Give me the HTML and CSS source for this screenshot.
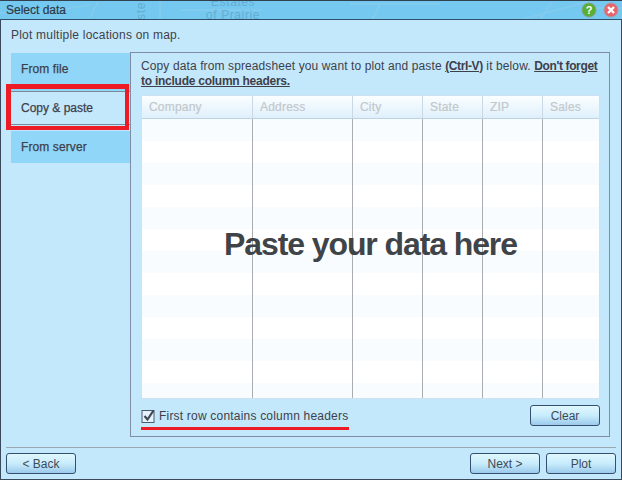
FILE: index.html
```html
<!DOCTYPE html>
<html lang="en">
<head>
<meta charset="utf-8">
<title>Select data</title>
<link rel="stylesheet" href="styles.css">
</head>
<body>
<div class="window">
  <header class="titlebar">
    <svg class="map" width="622" height="19" viewBox="0 0 622 19" aria-hidden="true">
      <path d="M0 12H40L90 4M98 0L90 17M160 0V19M180 9H262M520 19L590 0M540 19L552 0M590 7H622M350 3H440M380 3L372 19" fill="none" stroke="#80cbee" stroke-width="2"/>
    </svg>
    <span class="map-label map-estates">Estates</span>
    <span class="map-label map-prairie">of Prairie</span>
    <span class="map-label map-ste">ste</span>
    <span class="title">Select data</span>
    <svg class="title-icon help" width="16" height="16" viewBox="0 0 16 16" aria-label="Help">
      <circle cx="8" cy="8" r="7" fill="#58b032" stroke="#8aa08a"/>
      <text x="8" y="12" text-anchor="middle" class="glyph">?</text>
    </svg>
    <svg class="title-icon close" width="16" height="16" viewBox="0 0 16 16" aria-label="Close">
      <circle cx="8" cy="8" r="7" fill="#e8646c" stroke="#b09aa0"/>
      <path d="M5 5L11 11M11 5L5 11" stroke="#fff" stroke-width="2.4"/>
    </svg>
  </header>
  <main class="body">
    <p class="intro">Plot multiple locations on map.</p>
    <div class="content">
      <nav class="tabs">
        <div class="tab tab-file">From file</div>
        <div class="tab tab-active">Copy &amp; paste</div>
        <div class="tab tab-server">From server</div>
      </nav>
      <section class="panel">
        <p class="hint">Copy data from spreadsheet you want to plot and paste <b>(Ctrl-V)</b> it below. <b>Don't forget</b><br><b class="wide">to include column headers.</b></p>
        <div class="grid">
          <div class="grid-head">
            <div class="cell c1">Company</div>
            <div class="cell c2">Address</div>
            <div class="cell c3">City</div>
            <div class="cell c4">State</div>
            <div class="cell c5">ZIP</div>
            <div class="cell c6">Sales</div>
          </div>
          <div class="grid-body">
            <div class="col c1"></div>
            <div class="col c2"></div>
            <div class="col c3"></div>
            <div class="col c4"></div>
            <div class="col c5"></div>
            <div class="col c6"></div>
          </div>
          <div class="paste">Paste your data here</div>
        </div>
        <div class="panel-foot">
          <label class="check">
            <svg class="box" width="15" height="15" viewBox="0 0 15 15" aria-hidden="true">
              <rect x="1" y="1.5" width="12" height="12" fill="#e4f2fb" stroke="#4a5a6c"/>
              <path d="M3.5 7L6.5 10.5L12.5 1.5" fill="none" stroke="#404850" stroke-width="2.2"/>
            </svg>
            <span>First row contains column headers</span>
          </label>
          <button class="btn">Clear</button>
        </div>
      </section>
    </div>
    <footer class="footer">
      <button class="btn">&lt; Back</button>
      <div class="right">
        <button class="btn">Next &gt;</button>
        <button class="btn">Plot</button>
      </div>
    </footer>
  </main>
  <div class="mark-box"></div>
  <div class="mark-line"></div>
</div>
</body>
</html>
```

FILE: styles.css
```css
* { box-sizing: border-box; }
html, body { margin: 0; padding: 0; }
body {
  width: 622px;
  height: 480px;
  overflow: hidden;
  font-family: "Liberation Sans", Arial, sans-serif;
  font-size: 12px;
  color: #3f3f4a;
}
.window {
  position: relative;
  width: 622px;
  height: 480px;
  display: flex;
  flex-direction: column;
  background: #c3e8fb;
  border: 1px solid #3a4a5c;
  border-top-color: #30404f;
}
.titlebar {
  position: relative;
  flex: none;
  height: 19px;
  overflow: hidden;
  display: flex;
  align-items: center;
  gap: 4px;
  padding: 0 3px 0 6px;
  background: #75c8f0;
  border-bottom: 1px solid #2f4e68;
  margin: 0 -1px;
}
.map { position: absolute; left: 0; top: 0; }
.map-label {
  position: absolute;
  color: #66add0;
  font-size: 12px;
  letter-spacing: 0.6px;
  line-height: 12px;
}
.map-estates { left: 211px; top: -5px; }
.map-prairie { left: 206px; top: 8px; }
.map-ste { left: 132px; top: 4px; transform: rotate(-90deg); }
.title {
  position: relative;
  flex: 1;
  color: #2b3a46;
  -webkit-text-stroke: 0.2px #2b3a46;
}
.title-icon { position: relative; flex: none; }
.help { margin-right: 2px; }
.glyph { font: bold 11px "Liberation Sans", sans-serif; fill: #fff; }
.body {
  flex: 1;
  min-height: 0;
  display: flex;
  flex-direction: column;
  padding: 8px 5px 1px 5px;
}
.intro { margin: 0 0 9px 5px; line-height: 15px; letter-spacing: 0.22px; }
.content { flex: 1; min-height: 0; display: flex; padding-left: 5px; padding-right: 6px; }
.tabs { flex: none; width: 119px; display: flex; flex-direction: column; padding-top: 1px; }
.tab {
  padding-left: 10px;
  -webkit-text-stroke: 0.25px #3f3f4a;
  letter-spacing: 0.1px;
  background: #90d6f8;
  height: 32px;
  line-height: 32px;
}
.tab-file { height: 38px; }
.tab-active {
  position: relative;
  z-index: 1;
  left: -1px;
  width: 120px;
  height: 34px;
  letter-spacing: 0;
  background: #c3e8fb;
  border: 1px solid #7a8a9a;
  border-right: 0;
  margin: 0 -1px 6px 0;
}
.panel {
  flex: 1;
  min-width: 0;
  display: flex;
  flex-direction: column;
  border: 1px solid #7f8ca6;
  padding: 6px 9px 10px 10px;
}
.hint { margin: 0 0 6px; line-height: 15px; height: 30px; letter-spacing: 0.11px; white-space: nowrap; }
.hint b { text-decoration: underline; letter-spacing: -0.36px; }
.hint b.wide { letter-spacing: -0.25px; }
.grid {
  position: relative;
  width: 459px;
  height: 304px;
  background: #f9fcff;
  border: 1px solid #cfe0ee;
}
.grid-head {
  display: flex;
  height: 23px;
  border-bottom: 1px solid #bfd2e2;
  background: linear-gradient(#fbfeff, #dff0fb);
}
.cell {
  color: #c2c7cc;
  -webkit-text-stroke: 0.2px #c2c7cc;
  line-height: 23px;
  padding-left: 7px;
  border-right: 1px solid #c9d8e4;
  letter-spacing: 0.2px;
}
.c1 { width: 111px; }
.c2 { width: 100px; }
.c3 { width: 70px; }
.c4 { width: 60px; }
.c5 { width: 60px; }
.c6 { width: 56px; border-right: 0; }
.grid-body {
  display: flex;
  height: 279px;
  background: repeating-linear-gradient(#f9fcff 0 22px, #fff 22px 44px);
}
.col { border-right: 1px solid #a9adb2; }
.col.c6 { border-right: 0; }
.paste {
  position: absolute;
  left: 0;
  right: 0;
  top: 128px;
  text-align: center;
  font-size: 32px;
  line-height: 40px;
  font-weight: bold;
  letter-spacing: -1.1px;
  color: #3f4448;
}
.panel-foot {
  flex: 1;
  display: flex;
  justify-content: space-between;
  align-items: flex-end;
}
.check { display: flex; align-items: center; gap: 3px; height: 20px; letter-spacing: 0.2px; }
.box { display: block; }
.btn {
  width: 70px;
  height: 21px;
  padding: 0;
  font: 12px "Liberation Sans", Arial, sans-serif;
  color: #3d4a58;
  border: 1px solid #34506e;
  border-radius: 3px;
  background: linear-gradient(#e0f7fe, #c8ecfb 50%, #9ccaec);
}
.footer {
  flex: none;
  display: flex;
  justify-content: space-between;
  margin-top: 10px;
  border-top: 1px solid #9aa8b4;
  padding-top: 5px;
  height: 31px;
}
.right { display: flex; gap: 6px; }
.mark-box {
  position: absolute;
  z-index: 2;
  left: 5px;
  top: 83px;
  width: 123px;
  height: 46px;
  border: 4px solid #ed1c24;
  border-width: 5px 4px 4px 5px;
}
.mark-line {
  position: absolute;
  z-index: 2;
  left: 140px;
  top: 426px;
  width: 208px;
  height: 3px;
  background: #ed1c24;
}
```
